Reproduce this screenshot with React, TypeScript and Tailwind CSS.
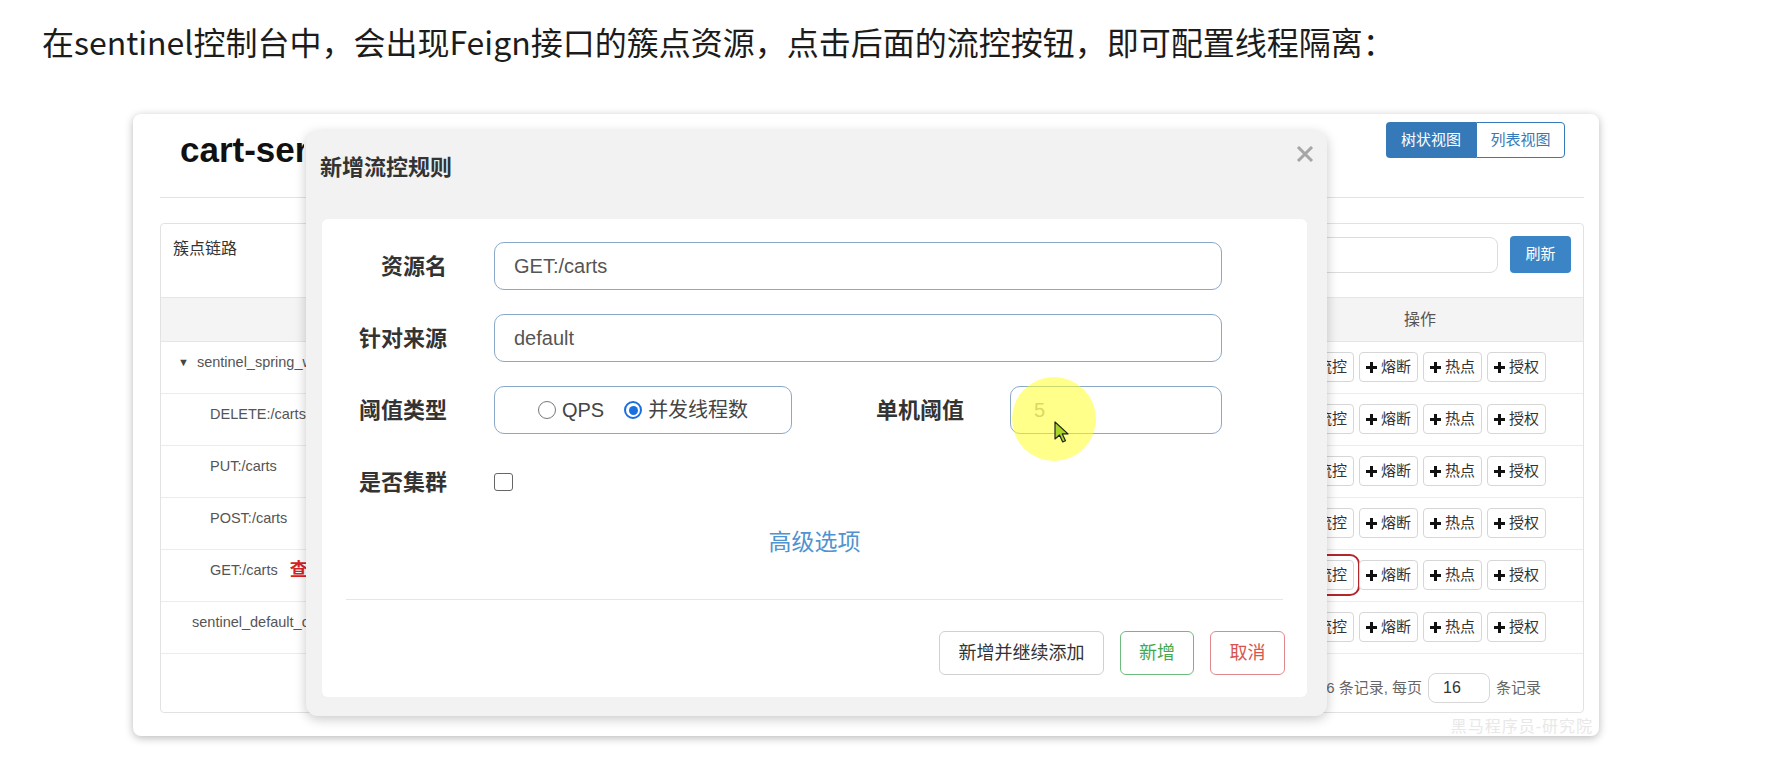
import React from "react";

const ui = "font-['Liberation_Sans','Noto_Sans_CJK_SC',sans-serif]";

const PlusIcon = () => (
  <svg width="13" height="13" viewBox="0 0 13 13" className="shrink-0">
    <path d="M6.5 1v11M1 6.5h11" stroke="#111" strokeWidth="3" />
  </svg>
);

const ActBtn: React.FC<{ label: string; hl?: boolean }> = ({ label, hl }) => (
  <div
    className={
      hl
        ? "h-[30px] w-[59px] rounded-[4px] border border-[#d6d6d6] bg-white flex items-center justify-center gap-[3px] text-[15px] text-[#333] outline-2 outline-[#b3262b] outline-offset-[4px]"
        : "h-[30px] w-[59px] rounded-[4px] border border-[#d6d6d6] bg-white flex items-center justify-center gap-[3px] text-[15px] text-[#333]"
    }
  >
    <PlusIcon />
    <span>{label}</span>
  </div>
);

const rows = [
  { name: "sentinel_spring_web_context", pad: "pl-[17px]", tree: true },
  { name: "DELETE:/carts", pad: "pl-[49px]" },
  { name: "PUT:/carts", pad: "pl-[49px]" },
  { name: "POST:/carts", pad: "pl-[49px]" },
  { name: "GET:/carts", pad: "pl-[49px]", mark: true, hl: true },
  { name: "sentinel_default_context", pad: "pl-[31px]" },
];

const Radio: React.FC<{ checked?: boolean }> = ({ checked }) =>
  checked ? (
    <span className="w-[18px] h-[18px] rounded-full border-2 border-[#1a6fe0] flex items-center justify-center shrink-0">
      <span className="w-[9px] h-[9px] rounded-full bg-[#1a6fe0]" />
    </span>
  ) : (
    <span className="w-[18px] h-[18px] rounded-full border-[1.5px] border-[#777] shrink-0" />
  );

const Modal = () => (
  <div className={`absolute left-[173px] top-[17px] w-[1021px] h-[585px] bg-[#f2f2f2] rounded-[12px] shadow-[0_3px_12px_rgba(0,0,0,0.22)] flex flex-col ${ui}`}>
    <div className="h-[88px] relative pl-[14px] pt-[22px]">
      <div className="text-[22px] leading-[30px] font-bold text-[#333]">新增流控规则</div>
      <svg width="18" height="16" viewBox="0 0 18 16" className="absolute right-[13px] top-[15px]">
        <path d="M2 1l14 14M16 1L2 15" stroke="#a6a6a6" strokeWidth="3" />
      </svg>
    </div>
    <div className="mx-[16px] w-[985px] h-[478px] bg-white rounded-[6px] flex flex-col pt-[23px] pb-[22px]">
      <div className="flex flex-col gap-[24px]">
        <div className="flex items-center h-[48px]">
          <div className="w-[125px] text-right text-[22px] font-bold text-[#333]">资源名</div>
          <div className="ml-[47px] w-[728px] h-[48px] rounded-[10px] border-[1.5px] border-[#8aa8c8] flex items-center pl-[19px] text-[20px] text-[#555]">GET:/carts</div>
        </div>
        <div className="flex items-center h-[48px]">
          <div className="w-[125px] text-right text-[22px] font-bold text-[#333]">针对来源</div>
          <div className="ml-[47px] w-[728px] h-[48px] rounded-[10px] border-[1.5px] border-[#8aa8c8] flex items-center pl-[19px] text-[20px] text-[#555]">default</div>
        </div>
        <div className="flex items-center h-[48px]">
          <div className="w-[125px] text-right text-[22px] font-bold text-[#333]">阈值类型</div>
          <div className="ml-[47px] w-[298px] h-[48px] rounded-[10px] border-[1.5px] border-[#8aa8c8] flex items-center justify-center gap-[6px] text-[20px] text-[#444]">
            <Radio />
            <span className="mr-[14px]">QPS</span>
            <Radio checked />
            <span>并发线程数</span>
          </div>
          <div className="ml-[47px] w-[125px] text-right text-[22px] font-bold text-[#333]">单机阈值</div>
          <div className="relative ml-[46px] w-[212px] h-[48px] rounded-[10px] border-[1.5px] border-[#8aa8c8] flex items-center pl-[23px] text-[20px] text-[#aaa]">
            5
            <span className="absolute left-[1px] top-[-10px] w-[84px] h-[84px] rounded-full bg-[rgba(255,255,40,0.55)]" />
            <svg width="16" height="22" viewBox="0 0 16 22" className="absolute left-[43px] top-[34px]">
              <path d="M1 1v17l4.5-4 3.2 7 2.8-1.3-3.2-6.8H14z" fill="#a9d42a" stroke="#222" strokeWidth="1.2" strokeLinejoin="round" />
            </svg>
          </div>
        </div>
        <div className="flex items-center h-[48px]">
          <div className="w-[125px] text-right text-[22px] font-bold text-[#333]">是否集群</div>
          <div className="ml-[47px] w-[19px] h-[18px] rounded-[3px] border-[1.5px] border-[#666]" />
        </div>
      </div>
      <div className="mt-[21px] text-center text-[23px] leading-[30px] text-[#4f93cf]">高级选项</div>
      <div className="mt-[42px] mx-[24px] h-px bg-[#e6e6e6]" />
      <div className="mt-[31px] flex justify-end gap-[16px] pr-[22px]">
        <div className="w-[165px] h-[44px] rounded-[6px] border border-[#d0d0d0] flex items-center justify-center text-[18px] text-[#333]">新增并继续添加</div>
        <div className="w-[74px] h-[44px] rounded-[6px] border-[1.5px] border-[#6dbb7d] flex items-center justify-center text-[18px] text-[#45a84f]">新增</div>
        <div className="w-[75px] h-[44px] rounded-[6px] border-[1.5px] border-[#e0898d] flex items-center justify-center text-[18px] text-[#d9534f]">取消</div>
      </div>
    </div>
  </div>
);

export default function App() {
  return (
    <div className="w-[1775px] h-[764px] bg-white overflow-hidden">
      <p className="pl-[42px] pt-[21px] text-[32px] leading-[40px] text-[#1c1c1c] font-['Noto_Sans_CJK_SC',sans-serif]">
        在sentinel控制台中，会出现Feign接口的簇点资源，点击后面的流控按钮，即可配置线程隔离：
      </p>
      <div className={`relative mt-[53px] ml-[133px] w-[1466px] h-[622px] bg-white rounded-[8px] shadow-[0_2px_9px_rgba(0,0,0,0.28)] ${ui}`}>
        <div className="h-[83px] flex items-start justify-between pl-[47px] pr-[34px]">
          {/* the rest of the title sits under the dialog */}
          <div className="mt-[16px] w-[124px] overflow-hidden whitespace-nowrap text-[35px] leading-[40px] font-bold text-[#111]">cart-service</div>
          <div className="mt-[8px] flex h-[36px] text-[15px]">
            <div className="w-[90px] rounded-l-[4px] bg-[#3579b8] text-white flex items-center justify-center">树状视图</div>
            <div className="w-[89px] rounded-r-[4px] border border-[#3579b8] text-[#3579b8] bg-white flex items-center justify-center">列表视图</div>
          </div>
        </div>
        <div className="ml-[27px] mr-[15px] h-px bg-[#e3e3e3]" />
        <div className="mt-[25px] ml-[27px] mr-[15px] h-[490px] rounded-[4px] border border-[#e2e2e2] flex flex-col">
          <div className="h-[73px] flex items-start justify-between pt-[12px] pl-[12px] pr-[12px]">
            <div className="mt-[1px] text-[16px] leading-[24px] text-[#333]">簇点链路</div>
            <div className="flex items-start gap-[12px]">
              <div className="mt-[1px] w-[300px] h-[36px] rounded-[8px] border border-[#dcdcdc]" />
              <div className="w-[61px] h-[37px] rounded-[4px] bg-[#3b84c5] text-white text-[15px] flex items-center justify-center">刷新</div>
            </div>
          </div>
          <div className="h-[45px] bg-[#f4f4f4] border-y border-[#e6e6e6] flex items-center">
            <div className="flex-1" />
            <div className="w-[326px] text-center text-[16px] text-[#555]">操作</div>
          </div>
          {rows.map((r) => (
            <div key={r.name} className="h-[52px] border-b border-[#ececec] flex items-start pt-[10px]">
              <div className={`flex-1 flex items-center h-[20px] text-[14.5px] leading-[20px] text-[#555] ${r.pad}`}>
                {r.tree && <span className="text-[11px] mr-[8px] text-[#444]">▼</span>}
                <span>{r.name}</span>
                {r.mark && <span className="ml-[12px] text-[18px] font-bold text-[#d42424]">查</span>}
              </div>
              <div className="w-[326px] flex justify-center gap-[5px]">
                <ActBtn label="流控" hl={r.hl} />
                <ActBtn label="熔断" />
                <ActBtn label="热点" />
                <ActBtn label="授权" />
              </div>
            </div>
          ))}
          <div className="mt-[19px] flex items-center justify-end pr-[42px] text-[15px] text-[#666]">
            <span>共 6 条记录, 每页</span>
            <div className="ml-[6px] mr-[6px] w-[62px] h-[30px] rounded-[8px] border border-[#d6d6d6] flex items-center pl-[14px] text-[16px] text-[#333]">16</div>
            <span>条记录</span>
          </div>
        </div>
        <div className="absolute right-[6px] bottom-[0px] text-[16px] leading-[18px] tracking-[1px] text-[#e8e8e8]">黑马程序员-研究院</div>
        <Modal />
      </div>
    </div>
  );
}
